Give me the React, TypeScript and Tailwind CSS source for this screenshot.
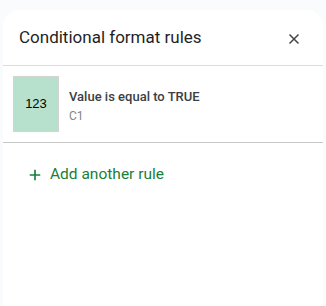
function CloseIcon() {
  return (
    <svg viewBox="0 0 24 24" className="h-[18px] w-[18px]" fill="none" stroke="currentColor" strokeWidth="2">
      <path d="M6 6l12 12M18 6L6 18" />
    </svg>
  )
}

function PlusIcon() {
  return (
    <svg viewBox="0 0 24 24" className="h-[18px] w-[18px]" fill="none" stroke="currentColor" strokeWidth="2.2">
      <path d="M12 5v14M5 12h14" />
    </svg>
  )
}

export default function App() {
  return (
    <div className="h-[306px] w-[326px] bg-[#f9fbfd] px-[3px] pt-[10px] font-['Roboto',sans-serif]">
      <div className="flex h-full flex-col rounded-t-[16px] bg-white">
        <div className="flex h-[56px] items-center justify-between border-b border-[#dadce0] pl-[16px] pr-[20px]">
          <h1 className="text-[17px] text-[#1f1f1f]">Conditional format rules</h1>
          <button className="mt-[2px] text-[#444746]">
            <CloseIcon />
          </button>
        </div>
        <div className="flex items-center gap-[10px] border-b border-[#c7c7c7] py-[10px] pl-[10px]">
          <div className="flex h-[56px] w-[46px] items-center justify-center border border-[#d3d3d3] bg-[#b7e1cd] font-['Liberation_Sans',sans-serif] text-[13px] text-black">
            123
          </div>
          <div className="flex flex-col pt-[4px]">
            <span className="text-[13px] font-medium leading-[18px] text-[#3c4043]">Value is equal to TRUE</span>
            <span className="pt-[1px] text-[12px] leading-[18px] text-[#80868b]">C1</span>
          </div>
        </div>
        <button className="mt-[20px] ml-[23px] flex items-center gap-[6px] self-start text-[15.5px] text-[#188038]">
          <PlusIcon />
          Add another rule
        </button>
      </div>
    </div>
  )
}
